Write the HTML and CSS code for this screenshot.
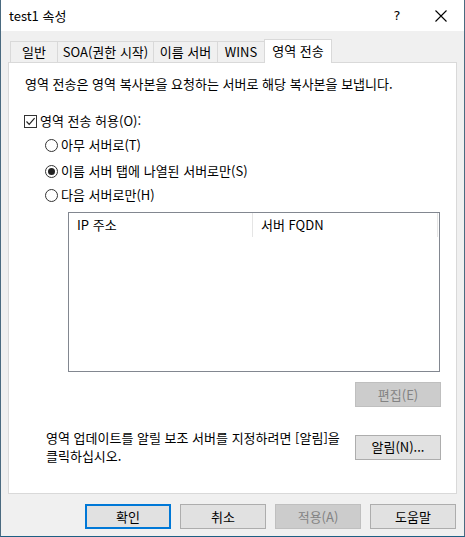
FILE: index.html
```html
<!DOCTYPE html>
<html lang="ko">
<head>
<meta charset="utf-8">
<link rel="stylesheet" href="styles.css">
</head>
<body>
<div class="window">
  <div class="titlebar">
    <span class="title">test1 속성</span>
    <span class="help">?</span>
    <span class="close">
      <svg width="12" height="12" viewBox="0 0 12 12"><path d="M0.5 0.5 L11.5 11.5 M11.5 0.5 L0.5 11.5" stroke="#000" stroke-width="1.1" fill="none"/></svg>
    </span>
  </div>
  <div class="content">
    <div class="tabs">
      <div class="tab t1">일반</div>
      <div class="tab t2">SOA(권한 시작)</div>
      <div class="tab t3">이름 서버</div>
      <div class="tab t4">WINS</div>
      <div class="tab active">영역 전송</div>
    </div>
    <div class="panel">
      <p class="desc">영역 전송은 영역 복사본을 요청하는 서버로 해당 복사본을 보냅니다.</p>
      <div class="row check-row">
        <span class="checkbox">
          <svg width="11" height="11" viewBox="0 0 11 11"><path d="M1.5 5.5 L4.2 8.3 L9.6 2.2" stroke="#222" stroke-width="1.2" fill="none"/></svg>
        </span>
        <span>영역 전송 허용(O):</span>
      </div>
      <div class="row radio-row"><span class="radio"></span><span>아무 서버로(T)</span></div>
      <div class="row radio-row"><span class="radio on"></span><span>이름 서버 탭에 나열된 서버로만(S)</span></div>
      <div class="row radio-row last"><span class="radio"></span><span>다음 서버로만(H)</span></div>
      <div class="listbox">
        <div class="list-head">
          <div class="col c1">IP 주소</div>
          <div class="col c2">서버 FQDN</div>
        </div>
      </div>
      <div class="edit-row">
        <button class="btn disabled">편집(E)</button>
      </div>
      <div class="notify-row">
        <div class="notify-text">
          <span class="line">영역 업데이트를 알릴 보조 서버를 지정하려면 [알림]을</span>
          <span class="line">클릭하십시오.</span>
        </div>
        <button class="btn">알림(N)...</button>
      </div>
    </div>
    <div class="footer">
      <button class="btn default">확인</button>
      <button class="btn">취소</button>
      <button class="btn disabled">적용(A)</button>
      <button class="btn">도움말</button>
    </div>
  </div>
</div>
</body>
</html>
```

FILE: styles.css
```css
* { box-sizing: border-box; }
html, body {
  margin: 0;
  padding: 0;
  background: #f0f0f0;
}
body {
  width: 465px;
  height: 537px;
  overflow: hidden;
  font-family: "Noto Sans CJK KR", "Noto Sans", sans-serif;
  font-size: 13px;
  color: #000;
}
.window {
  width: 465px;
  height: 537px;
  border-left: 1px solid #4a6a80;
  border-right: 1px solid #4a6a80;
  border-bottom: 1px solid #1d5f84;
  background: #f0f0f0;
  display: flex;
  flex-direction: column;
}
.titlebar {
  height: 31px;
  background: #fff;
  display: flex;
  align-items: center;
  padding-left: 8px;
}
.title { flex: 1; line-height: 16px; }
.help {
  width: 12px;
  margin-right: 32px;
  font-family: "DejaVu Sans", sans-serif;
  font-size: 13px;
  text-align: center;
}
.close {
  width: 12px;
  height: 12px;
  display: flex;
  margin-right: 17px;
}
.content {
  flex: 1;
  padding: 8px 7px 0 7px;
}
.tabs {
  display: flex;
  align-items: flex-end;
  height: 23px;
  padding-left: 2px;
  position: relative;
  z-index: 1;
}
.tab {
  height: 21px;
  border: 1px solid #d9d9d9;
  border-bottom: none;
  border-right: none;
  background: #f0f0f0;
  line-height: 19px;
  text-align: center;
  white-space: nowrap;
}
.t1 { width: 47px; }
.t2 { width: 96px; }
.t3 { width: 64px; }
.t4 { width: 47px; }
.tab.active {
  width: 68px;
  height: 24px;
  margin-bottom: -1px;
  background: #fff;
  border-right: 1px solid #d9d9d9;
  line-height: 21px;
}
.panel {
  width: 449px;
  height: 432px;
  background: #fff;
  border: 1px solid #d9d9d9;
  display: flex;
  flex-direction: column;
}
.desc {
  margin: 13px 0 0 16px;
  line-height: 16px;
  height: 16px;
  white-space: nowrap;
}
.row {
  display: flex;
  align-items: center;
  height: 16px;
  line-height: 16px;
  white-space: nowrap;
}
.check-row {
  margin: 21px 0 0 15px;
  gap: 3px;
}
.checkbox {
  width: 13px;
  height: 13px;
  border: 1px solid #333;
  display: flex;
  align-items: center;
  justify-content: center;
}
.radio-row {
  margin: 8px 0 0 36px;
  gap: 3px;
}
.radio-row + .radio-row { margin-top: 10px; }
.radio-row.last { margin-top: 8px; }
.radio {
  width: 13px;
  height: 13px;
  border: 1px solid #333;
  border-radius: 50%;
  display: flex;
  align-items: center;
  justify-content: center;
}
.radio.on::after {
  content: "";
  width: 7px;
  height: 7px;
  border-radius: 50%;
  background: #222;
}
.listbox {
  margin: 9px 0 0 59px;
  width: 372px;
  height: 160px;
  border: 1px solid #828790;
  background: #fff;
}
.list-head {
  display: flex;
  height: 25px;
}
.col {
  padding-left: 8px;
  line-height: 24px;
  border-right: 1px solid #e5e5e5;
  height: 24px;
}
.c1 { width: 184px; }
.c2 { width: 185px; }
.edit-row {
  display: flex;
  justify-content: flex-end;
  margin: 10px 15px 0 0;
}
.notify-row {
  display: flex;
  justify-content: space-between;
  align-items: center;
  margin: 22px 15px 0 37px;
}
.notify-text {
  display: flex;
  flex-direction: column;
}
.line {
  display: block;
  height: 18px;
  line-height: 18px;
  white-space: nowrap;
}
.btn {
  width: 86px;
  height: 25px;
  padding: 0;
  background: #e1e1e1;
  border: 1px solid #adadad;
  font-family: "Noto Sans CJK KR", "Noto Sans", sans-serif;
  font-size: 13px;
  color: #000;
  line-height: 20px;
}
.btn.disabled {
  background: #cccccc;
  border-color: #bfbfbf;
  color: #838383;
}
.btn.default {
  border: 2px solid #0078d7;
}
.footer {
  display: flex;
  justify-content: flex-end;
  gap: 9px;
  margin-top: 10px;
  padding-right: 1px;
}
```
